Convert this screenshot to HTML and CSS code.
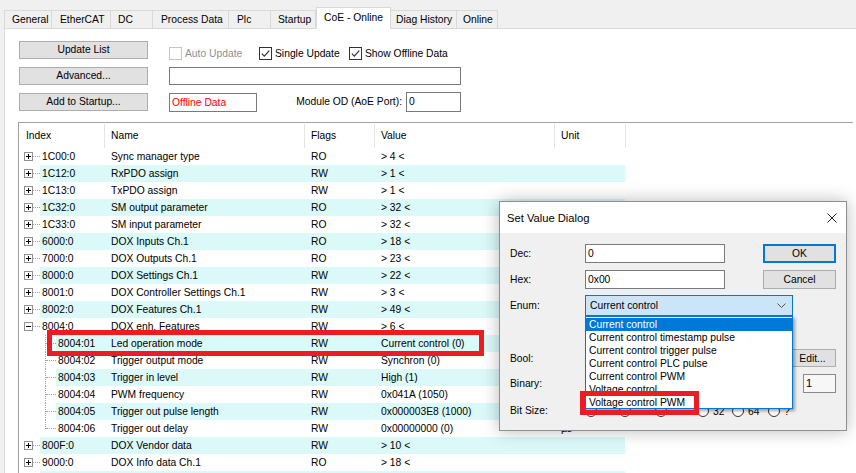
FILE: index.html
```html
<!DOCTYPE html>
<html>
<head>
<meta charset="utf-8">
<title>CoE - Online</title>
<link rel="stylesheet" href="styles.css">
</head>
<body>
<div class="tabs">
  <div class="tab first w-general">General</div>
  <div class="tab w-ethercat">EtherCAT</div>
  <div class="tab w-dc">DC</div>
  <div class="tab w-process">Process Data</div>
  <div class="tab w-plc">Plc</div>
  <div class="tab w-startup">Startup</div>
  <div class="tab sel w-coe">CoE - Online</div>
  <div class="tab w-diag">Diag History</div>
  <div class="tab w-online">Online</div>
</div>

<div class="panel">
  <div class="controls">
    <button class="btn">Update List</button>
    <div class="checks">
      <label class="chk disabled"><span class="box"></span>Auto Update</label>
      <label class="chk"><span class="box"><svg width="11" height="11" viewBox="0 0 11 11"><path d="M1.8 5.6 L4.3 8.1 L9.3 2.6" fill="none" stroke="#333" stroke-width="1.2"/></svg></span>Single Update</label>
      <label class="chk"><span class="box"><svg width="11" height="11" viewBox="0 0 11 11"><path d="M1.8 5.6 L4.3 8.1 L9.3 2.6" fill="none" stroke="#333" stroke-width="1.2"/></svg></span>Show Offline Data</label>
    </div>
    <button class="btn">Advanced...</button>
    <div class="input wide"></div>
    <button class="btn">Add to Startup...</button>
    <div class="row3">
      <div class="input offline">Offline Data</div>
      <span class="modlabel">Module OD (AoE Port):</span>
      <div class="input port">0</div>
    </div>
  </div>

  <div class="table">
    <div class="thead">
      <div class="th h-idx">Index</div>
      <div class="th h-name">Name</div>
      <div class="th h-flag">Flags</div>
      <div class="th h-val">Value</div>
      <div class="th h-unit">Unit</div>
    </div>

    <div class="tr">
      <div class="gut"><svg class="exp" width="9" height="9" viewBox="0 0 9 9"><rect x="0.5" y="0.5" width="8" height="8" fill="#fff" stroke="#919191"/><path d="M2 4.5H7M4.5 2V7" stroke="#000"/></svg><span class="hd"></span></div>
      <div class="band"><span class="ci">1C00:0</span><span class="cn">Sync manager type</span><span class="cf">RO</span><span class="cv">&gt; 4 &lt;</span><span class="cu"></span></div>
    </div>
    <div class="tr alt">
      <div class="gut"><svg class="exp" width="9" height="9" viewBox="0 0 9 9"><rect x="0.5" y="0.5" width="8" height="8" fill="#fff" stroke="#919191"/><path d="M2 4.5H7M4.5 2V7" stroke="#000"/></svg><span class="hd"></span></div>
      <div class="band"><span class="ci">1C12:0</span><span class="cn">RxPDO assign</span><span class="cf">RW</span><span class="cv">&gt; 1 &lt;</span><span class="cu"></span></div>
    </div>
    <div class="tr">
      <div class="gut"><svg class="exp" width="9" height="9" viewBox="0 0 9 9"><rect x="0.5" y="0.5" width="8" height="8" fill="#fff" stroke="#919191"/><path d="M2 4.5H7M4.5 2V7" stroke="#000"/></svg><span class="hd"></span></div>
      <div class="band"><span class="ci">1C13:0</span><span class="cn">TxPDO assign</span><span class="cf">RW</span><span class="cv">&gt; 1 &lt;</span><span class="cu"></span></div>
    </div>
    <div class="tr alt">
      <div class="gut"><svg class="exp" width="9" height="9" viewBox="0 0 9 9"><rect x="0.5" y="0.5" width="8" height="8" fill="#fff" stroke="#919191"/><path d="M2 4.5H7M4.5 2V7" stroke="#000"/></svg><span class="hd"></span></div>
      <div class="band"><span class="ci">1C32:0</span><span class="cn">SM output parameter</span><span class="cf">RO</span><span class="cv">&gt; 32 &lt;</span><span class="cu"></span></div>
    </div>
    <div class="tr">
      <div class="gut"><svg class="exp" width="9" height="9" viewBox="0 0 9 9"><rect x="0.5" y="0.5" width="8" height="8" fill="#fff" stroke="#919191"/><path d="M2 4.5H7M4.5 2V7" stroke="#000"/></svg><span class="hd"></span></div>
      <div class="band"><span class="ci">1C33:0</span><span class="cn">SM input parameter</span><span class="cf">RO</span><span class="cv">&gt; 32 &lt;</span><span class="cu"></span></div>
    </div>
    <div class="tr alt">
      <div class="gut"><svg class="exp" width="9" height="9" viewBox="0 0 9 9"><rect x="0.5" y="0.5" width="8" height="8" fill="#fff" stroke="#919191"/><path d="M2 4.5H7M4.5 2V7" stroke="#000"/></svg><span class="hd"></span></div>
      <div class="band"><span class="ci">6000:0</span><span class="cn">DOX Inputs Ch.1</span><span class="cf">RO</span><span class="cv">&gt; 18 &lt;</span><span class="cu"></span></div>
    </div>
    <div class="tr">
      <div class="gut"><svg class="exp" width="9" height="9" viewBox="0 0 9 9"><rect x="0.5" y="0.5" width="8" height="8" fill="#fff" stroke="#919191"/><path d="M2 4.5H7M4.5 2V7" stroke="#000"/></svg><span class="hd"></span></div>
      <div class="band"><span class="ci">7000:0</span><span class="cn">DOX Outputs Ch.1</span><span class="cf">RO</span><span class="cv">&gt; 23 &lt;</span><span class="cu"></span></div>
    </div>
    <div class="tr alt">
      <div class="gut"><svg class="exp" width="9" height="9" viewBox="0 0 9 9"><rect x="0.5" y="0.5" width="8" height="8" fill="#fff" stroke="#919191"/><path d="M2 4.5H7M4.5 2V7" stroke="#000"/></svg><span class="hd"></span></div>
      <div class="band"><span class="ci">8000:0</span><span class="cn">DOX Settings Ch.1</span><span class="cf">RW</span><span class="cv">&gt; 22 &lt;</span><span class="cu"></span></div>
    </div>
    <div class="tr">
      <div class="gut"><svg class="exp" width="9" height="9" viewBox="0 0 9 9"><rect x="0.5" y="0.5" width="8" height="8" fill="#fff" stroke="#919191"/><path d="M2 4.5H7M4.5 2V7" stroke="#000"/></svg><span class="hd"></span></div>
      <div class="band"><span class="ci">8001:0</span><span class="cn">DOX Controller Settings Ch.1</span><span class="cf">RW</span><span class="cv">&gt; 3 &lt;</span><span class="cu"></span></div>
    </div>
    <div class="tr alt">
      <div class="gut"><svg class="exp" width="9" height="9" viewBox="0 0 9 9"><rect x="0.5" y="0.5" width="8" height="8" fill="#fff" stroke="#919191"/><path d="M2 4.5H7M4.5 2V7" stroke="#000"/></svg><span class="hd"></span></div>
      <div class="band"><span class="ci">8002:0</span><span class="cn">DOX Features Ch.1</span><span class="cf">RW</span><span class="cv">&gt; 49 &lt;</span><span class="cu"></span></div>
    </div>
    <div class="tr">
      <div class="gut"><svg class="exp" width="9" height="9" viewBox="0 0 9 9"><rect x="0.5" y="0.5" width="8" height="8" fill="#fff" stroke="#919191"/><path d="M2 4.5H7" stroke="#000"/></svg><span class="hd"></span></div>
      <div class="band"><span class="ci">8004:0</span><span class="cn">DOX enh. Features</span><span class="cf">RW</span><span class="cv">&gt; 6 &lt;</span><span class="cu"></span></div>
    </div>

    <div class="tr alt child">
      <div class="gut"><span class="vl"></span><span class="hd2"></span></div>
      <div class="band"><span class="ci">8004:01</span><span class="cn">Led operation mode</span><span class="cf">RW</span><span class="cv">Current control (0)</span><span class="cu"></span></div>
    </div>
    <div class="tr child">
      <div class="gut"><span class="vl"></span><span class="hd2"></span></div>
      <div class="band"><span class="ci">8004:02</span><span class="cn">Trigger output mode</span><span class="cf">RW</span><span class="cv">Synchron (0)</span><span class="cu"></span></div>
    </div>
    <div class="tr alt child">
      <div class="gut"><span class="vl"></span><span class="hd2"></span></div>
      <div class="band"><span class="ci">8004:03</span><span class="cn">Trigger in level</span><span class="cf">RW</span><span class="cv">High (1)</span><span class="cu"></span></div>
    </div>
    <div class="tr child">
      <div class="gut"><span class="vl"></span><span class="hd2"></span></div>
      <div class="band"><span class="ci">8004:04</span><span class="cn">PWM frequency</span><span class="cf">RW</span><span class="cv">0x041A (1050)</span><span class="cu"></span></div>
    </div>
    <div class="tr alt child">
      <div class="gut"><span class="vl"></span><span class="hd2"></span></div>
      <div class="band"><span class="ci">8004:05</span><span class="cn">Trigger out pulse length</span><span class="cf">RW</span><span class="cv">0x000003E8 (1000)</span><span class="cu"></span></div>
    </div>
    <div class="tr child">
      <div class="gut"><span class="vl half"></span><span class="hd2"></span></div>
      <div class="band"><span class="ci">8004:06</span><span class="cn">Trigger out delay</span><span class="cf">RW</span><span class="cv">0x00000000 (0)</span><span class="cu">µs</span></div>
    </div>

    <div class="tr alt">
      <div class="gut"><svg class="exp" width="9" height="9" viewBox="0 0 9 9"><rect x="0.5" y="0.5" width="8" height="8" fill="#fff" stroke="#919191"/><path d="M2 4.5H7M4.5 2V7" stroke="#000"/></svg><span class="hd"></span></div>
      <div class="band"><span class="ci">800F:0</span><span class="cn">DOX Vendor data</span><span class="cf">RW</span><span class="cv">&gt; 10 &lt;</span><span class="cu"></span></div>
    </div>
    <div class="tr">
      <div class="gut"><svg class="exp" width="9" height="9" viewBox="0 0 9 9"><rect x="0.5" y="0.5" width="8" height="8" fill="#fff" stroke="#919191"/><path d="M2 4.5H7M4.5 2V7" stroke="#000"/></svg><span class="hd"></span></div>
      <div class="band"><span class="ci">9000:0</span><span class="cn">DOX Info data Ch.1</span><span class="cf">RO</span><span class="cv">&gt; 18 &lt;</span><span class="cu"></span></div>
    </div>
    <div class="tr alt">
      <div class="gut"></div>
      <div class="band"><span class="ci"></span><span class="cn"></span><span class="cf"></span><span class="cv"></span><span class="cu"></span></div>
    </div>
  </div>
</div>

<div class="hl hl-row"></div>

<div class="dialog">
  <div class="dlg-title">
    <span>Set Value Dialog</span>
    <svg class="close" width="10" height="10" viewBox="0 0 10 10"><path d="M0.5 0.5L9.5 9.5M9.5 0.5L0.5 9.5" stroke="#222" stroke-width="1"/></svg>
  </div>
  <div class="dlg-body">
    <div class="drow r-dec"><span class="dl">Dec:</span><div class="field">0</div><button class="dbtn def">OK</button></div>
    <div class="drow r-hex"><span class="dl">Hex:</span><div class="field">0x00</div><button class="dbtn">Cancel</button></div>
    <div class="drow r-enum"><span class="dl">Enum:</span><div class="combo"><span>Current control</span><svg width="9" height="5" viewBox="0 0 9 5"><path d="M0.5 0.5L4.5 4.5L8.5 0.5" fill="none" stroke="#555"/></svg></div></div>
    <div class="drow r-bool"><span class="dl">Bool:</span><button class="dbtn edit">Edit...</button></div>
    <div class="drow r-bin"><span class="dl">Binary:</span><div class="field small">1</div></div>
    <div class="drow r-bits"><span class="dl">Bit Size:</span>
      <div class="radios">
        <span class="radio rw1"><span class="rc"></span></span>
        <span class="radio rw2"><span class="rc"></span></span>
        <span class="radio rw3"><span class="rc"></span></span>
        <span class="radio rw4"><span class="rc"></span>32</span>
        <span class="radio rw5"><span class="rc"></span>64</span>
        <span class="radio"><span class="rc"></span>?</span>
      </div>
    </div>
  </div>
  <div class="droplist">
    <div class="opt on">Current control</div>
    <div class="opt">Current control timestamp pulse</div>
    <div class="opt">Current control trigger pulse</div>
    <div class="opt">Current control PLC pulse</div>
    <div class="opt">Current control PWM</div>
    <div class="opt">Voltage control</div>
    <div class="opt">Voltage control PWM</div>
  </div>
</div>

<div class="hl hl-opt"></div>
</body>
</html>
```

FILE: styles.css
```css
html, body {
  margin: 0;
  padding: 0;
}
body {
  width: 856px;
  height: 473px;
  overflow: hidden;
  position: relative;
  background: #f0f0f0;
  font-family: "Liberation Sans", Arial, sans-serif;
  font-size: 10.3px;
  color: #000;
}

/* ---------- tabs ---------- */
.tabs {
  display: flex;
  align-items: flex-end;
  height: 28px;
  padding-left: 4px;
}
.tab {
  box-sizing: border-box;
  height: 18px;
  line-height: 17px;
  padding-left: 7px;
  border-top: 1px solid #d9d9d9;
  border-right: 1px solid #d9d9d9;
  background: #f0f0f0;
  white-space: nowrap;
  flex: none;
}
.tab.first { border-left: 1px solid #d9d9d9; }
.tab.sel {
  position: relative;
  z-index: 2;
  height: 22px;
  line-height: 19px;
  margin-bottom: -1px;
  background: #fff;
  border-left: 1px solid #d9d9d9;
}
.w-general { width: 48px; }
.w-ethercat { width: 59px; padding-left: 8px; }
.w-dc { width: 42px; }
.w-process { width: 76px; padding-left: 8px; }
.w-plc { width: 42px; padding-left: 8px; }
.w-startup { width: 45px; }
.w-coe { width: 75px; }
.w-diag { width: 66px; padding-left: 5px; }
.w-online { width: 41px; padding-left: 6px; }

/* ---------- panel ---------- */
.panel {
  box-sizing: border-box;
  height: 445px;
  margin-left: 4px;
  background: #fff;
  border-left: 1px solid #d9d9d9;
  border-top: 1px solid #d9d9d9;
  padding: 12px 0 0 14px;
}
.controls {
  display: grid;
  grid-template-columns: 129px 292px;
  grid-auto-rows: 18px;
  column-gap: 21px;
  row-gap: 8px;
}
.btn {
  box-sizing: border-box;
  height: 18px;
  margin: 0;
  padding: 0;
  background: #e1e1e1;
  border: 1px solid #adadad;
  font: inherit;
  color: #000;
  text-align: center;
  line-height: 16px;
}
.checks {
  display: flex;
  align-items: center;
  padding-top: 6px;
  height: 13px;
}
.chk {
  display: flex;
  align-items: center;
  gap: 3px;
  width: 90px;
  white-space: nowrap;
  flex: none;
}
.chk .box {
  box-sizing: border-box;
  width: 13px;
  height: 13px;
  border: 1px solid #333;
  background: #fff;
  display: flex;
  align-items: center;
  justify-content: center;
  flex: none;
}
.chk.disabled { color: #909090; }
.chk.disabled .box { border-color: #c4c4c4; }

.input {
  box-sizing: border-box;
  border: 1px solid #7a7a7a;
  background: #fff;
  padding-left: 2px;
  white-space: nowrap;
}
.input.wide { height: 18px; }
.row3 {
  display: flex;
  align-items: center;
  margin-top: -1px;
  height: 20px;
}
.input.offline {
  width: 88px;
  height: 19px;
  line-height: 17px;
  color: #ff0000;
}
.modlabel {
  margin-left: auto;
  margin-right: 4px;
  margin-top: -2px;
}
.input.port {
  width: 55px;
  height: 20px;
  line-height: 18px;
}

/* ---------- table ---------- */
.table {
  margin-top: 11px;
  margin-left: -1px;
  width: 834px;
  border-top: 1px solid #a0a0a0;
  border-left: 1px solid #a0a0a0;
  background: #fff;
}
.thead {
  display: flex;
  height: 25px;
}
.th {
  box-sizing: border-box;
  padding-left: 6px;
  border-right: 1px solid #e5e5e5;
  margin-top: 1px;
  line-height: 23px;
  flex: none;
}
.h-idx { width: 86px; padding-left: 7px; }
.h-name { width: 200px; }
.h-flag { width: 70px; }
.h-val { width: 180px; }
.h-unit { width: 71px; }

.tr {
  display: flex;
  height: 17px;
  line-height: 17px;
}
.gut {
  display: flex;
  align-items: center;
  width: 21px;
  flex: none;
}
.exp {
  display: block;
  margin-left: 5px;
  flex: none;
}
.hd {
  width: 7px;
  height: 0;
  border-top: 1px dotted #a0a0a0;
}
.child .gut { width: 37px; }
.vl {
  align-self: stretch;
  margin-left: 26px;
  border-left: 1px dotted #a0a0a0;
}
.vl.half {
  align-self: flex-start;
  height: 9px;
}
.hd2 {
  width: 10px;
  height: 0;
  border-top: 1px dotted #a0a0a0;
}
.band {
  display: flex;
  flex: none;
}
.alt .band { background: #dbf9f9; }
.band span {
  box-sizing: border-box;
  white-space: nowrap;
  overflow: hidden;
  flex: none;
  padding-left: 6px;
}
.band .ci { width: 65px; padding-left: 2px; }
.child .band .ci { width: 49px; }
.band .cn { width: 200px; }
.band .cf { width: 70px; }
.band .cv { width: 180px; }
.band .cu { width: 70px; }

/* ---------- highlights ---------- */
.hl {
  position: absolute;
  box-sizing: border-box;
  border: 5px solid #ed1c24;
  z-index: 5;
}
.hl-row { left: 47px; top: 330px; width: 437px; height: 26px; }
.hl-opt { left: 580px; top: 391px; width: 119px; height: 24px; z-index: 20; }

/* ---------- dialog ---------- */
.dialog {
  position: absolute;
  left: 499px;
  top: 201px;
  width: 348px;
  height: 230px;
  box-sizing: border-box;
  border: 1px solid #8f8f8f;
  background: #f0f0f0;
  box-shadow: 0 0 16px rgba(0, 0, 0, 0.28);
  z-index: 10;
}
.dlg-title {
  height: 31px;
  background: #fff;
  display: flex;
  align-items: center;
  justify-content: space-between;
  padding: 0 9px 0 7px;
  font-size: 11.2px;
}
.close { display: block; }
.dlg-body {
  padding: 11px 10px 0 10px;
}
.drow {
  display: flex;
  align-items: center;
}
.dl {
  width: 75px;
  flex: none;
}
.r-dec { height: 19px; }
.r-hex { height: 19px; margin-top: 7px; }
.r-enum { height: 21px; margin-top: 6px; }
.r-bool { height: 18px; margin-top: 33px; }
.r-bin { height: 19px; margin-top: 7px; }
.r-bits { height: 14px; margin-top: 10px; }

.field {
  box-sizing: border-box;
  width: 140px;
  height: 19px;
  line-height: 17px;
  border: 1px solid #7a7a7a;
  background: #fff;
  padding-left: 2px;
}
.field.small {
  width: 33px;
  margin-left: auto;
  background: #f7f7f7;
  border-color: #8a8a8a;
  font-size: 11px;
}
.dbtn {
  box-sizing: border-box;
  margin: 0 0 0 auto;
  padding: 0;
  width: 73px;
  height: 19px;
  background: #e1e1e1;
  border: 1px solid #adadad;
  font: inherit;
  color: #000;
  text-align: center;
}
.dbtn.def { border: 2px solid #0078d7; }
.dbtn.edit { width: 47px; height: 18px; }

.combo {
  box-sizing: border-box;
  width: 208px;
  height: 21px;
  border: 1px solid #0078d7;
  background: #cce4f7;
  display: flex;
  align-items: center;
  justify-content: space-between;
  padding: 0 6px 0 4px;
}
.radios {
  display: flex;
  align-items: center;
  margin-top: 2px;
}
.radio {
  display: flex;
  align-items: center;
  gap: 4px;
  flex: none;
}
.rc {
  box-sizing: border-box;
  width: 12px;
  height: 12px;
  border: 1px solid #333;
  border-radius: 50%;
  background: #fff;
}
.rw1 { width: 34px; }
.rw2 { width: 36px; }
.rw3 { width: 42px; }
.rw4 { width: 35px; }
.rw5 { width: 36px; }

.droplist {
  position: absolute;
  left: 85px;
  top: 114px;
  width: 208px;
  height: 93px;
  box-sizing: border-box;
  border: 1px solid #0078d7;
  background: #fff;
  padding-top: 1px;
  box-shadow: 2px 2px 3px rgba(0, 0, 0, 0.35);
}
.opt {
  height: 13px;
  line-height: 13px;
  padding-left: 3px;
  white-space: nowrap;
}
.opt.on {
  background: #0078d7;
  color: #fff;
}
```
